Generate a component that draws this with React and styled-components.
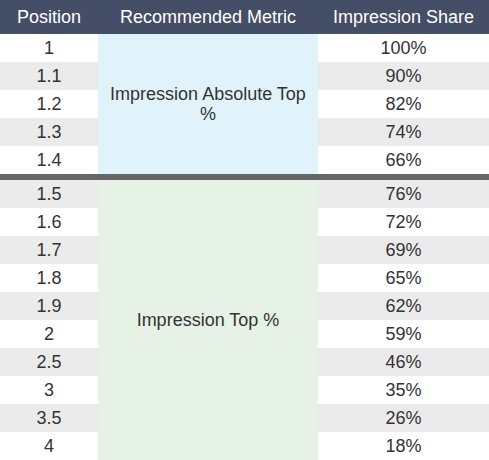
import React from "react"
import styled, { createGlobalStyle } from "styled-components"

const GlobalStyle = createGlobalStyle`
  body {
    margin: 0;
    background: #fff;
    font-family: "Liberation Sans", Arial, sans-serif;
  }
`

const groups = [
  {
    metric: "Impression Absolute Top %",
    tint: "#e0f3fa",
    rows: [
      ["1", "100%"],
      ["1.1", "90%"],
      ["1.2", "82%"],
      ["1.3", "74%"],
      ["1.4", "66%"],
    ],
  },
  {
    metric: "Impression Top %",
    tint: "#e6f2e5",
    rows: [
      ["1.5", "76%"],
      ["1.6", "72%"],
      ["1.7", "69%"],
      ["1.8", "65%"],
      ["1.9", "62%"],
      ["2", "59%"],
      ["2.5", "46%"],
      ["3", "35%"],
      ["3.5", "26%"],
      ["4", "18%"],
    ],
  },
]

const App = () => {
  let index = 0
  return (
    <>
      <GlobalStyle />
      <Table>
        <colgroup>
          <col style={{ width: 98 }} />
          <col style={{ width: 220 }} />
          <col style={{ width: 171 }} />
        </colgroup>
        <thead>
          <tr>
            <HeadCell>Position</HeadCell>
            <HeadCell>Recommended Metric</HeadCell>
            <HeadCell>Impression Share</HeadCell>
          </tr>
        </thead>
        {groups.map((group, g) => (
          <Group key={group.metric} $divided={g > 0}>
            {group.rows.map(([pos, share], i) => {
              const striped = index++ % 2 === 1
              return (
                <Row key={pos} $striped={striped}>
                  <Cell>{pos}</Cell>
                  {i === 0 && (
                    <MetricCell rowSpan={group.rows.length} $tint={group.tint}>
                      {group.metric}
                    </MetricCell>
                  )}
                  <Cell>{share}</Cell>
                </Row>
              )
            })}
          </Group>
        ))}
      </Table>
    </>
  )
}

const Table = styled.table`
  width: 489px;
  border-collapse: collapse;
  table-layout: fixed;
  font-size: 18px;
  color: #333;
`

const HeadCell = styled.th`
  height: 34px;
  padding: 0;
  background: #444e66;
  color: #fff;
  font-weight: normal;
  text-align: center;
  vertical-align: middle;
`

const Group = styled.tbody`
  border-top: ${props => (props.$divided ? "6px solid #666" : "none")};
`

const Row = styled.tr`
  background: ${props => (props.$striped ? "#ebebeb" : "#fff")};
`

const Cell = styled.td`
  height: 28px;
  padding: 0;
  text-align: center;
  vertical-align: middle;
`

const MetricCell = styled.td`
  padding: 0 8px;
  background: ${props => props.$tint};
  text-align: center;
  vertical-align: middle;
  line-height: 20px;
`

export default App
